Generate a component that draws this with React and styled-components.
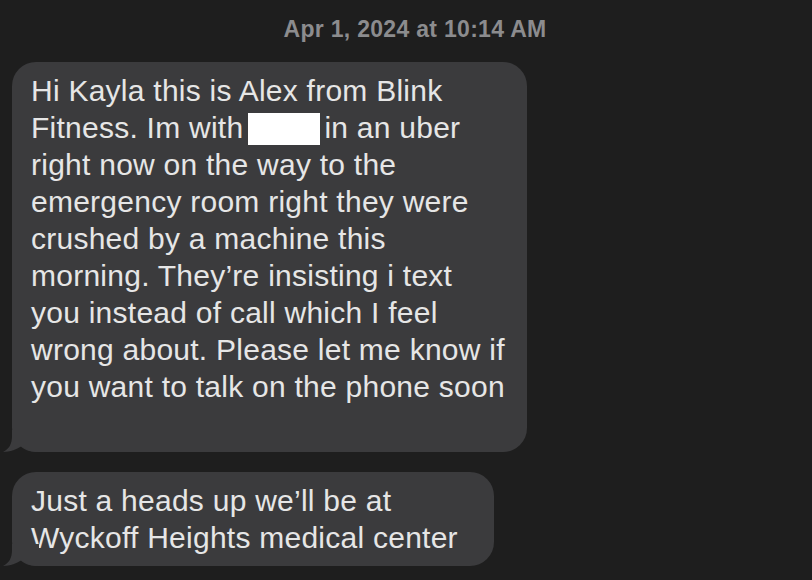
import React from 'react'
import styled, { createGlobalStyle } from 'styled-components'

const GlobalStyle = createGlobalStyle`
  html, body {
    margin: 0;
    padding: 0;
    background: #1e1e1e;
  }
  body {
    font-family: "Liberation Sans", Arial, sans-serif;
  }
`

const Thread = styled.div`
  width: 812px;
  height: 580px;
  overflow: hidden;
  background: #1e1e1e;
  display: flex;
  flex-direction: column;
  padding: 14px 0 0 12px;
  box-sizing: border-box;
`

const Stamp = styled.div`
  align-self: center;
  margin-left: 6px;
  color: #8c8c8e;
  font-size: 23px;
  font-weight: 700;
  line-height: 30px;
  letter-spacing: 0.3px;
`

const Bubble = styled.div`
  position: relative;
  width: ${p => p.width}px;
  box-sizing: border-box;
  margin-top: ${p => p.gap}px;
  padding: 10px 19px;
  background: #3b3b3d;
  border-radius: 24px;
  color: #e6e6e6;
  font-size: 30px;
  line-height: 37px;
  letter-spacing: 0.25px;
`

const Line = styled.div`
  white-space: nowrap;
  height: 37px;
`

const Redacted = styled.span`
  display: inline-block;
  width: 72px;
  height: 32px;
  background: #ffffff;
  vertical-align: -7px;
  margin: 0 4px 0 5px;
`

const Tail = styled.svg`
  position: absolute;
  left: -9px;
  bottom: 0;
`

const BubbleTail = () => (
  <Tail width="36" height="22" viewBox="0 0 36 22">
    <path
      d="M9 0 L9 6 C9 14 6 19 0 22 C7 22 14 19 19 16 C22 19 27 22 36 22 L36 0 Z"
      fill="#3b3b3d"
    />
  </Tail>
)

const first = [
  'Hi Kayla this is Alex from Blink',
  null,
  'right now on the way to the',
  'emergency room right they were',
  'crushed by a machine this',
  'morning. They’re insisting i text',
  'you instead of call which I feel',
  'wrong about. Please let me know if',
  'you want to talk on the phone soon',
  ''
]

const second = [
  'Just a heads up we’ll be at',
  'Wyckoff Heights medical center'
]

export default function App () {
  return (
    <>
      <GlobalStyle />
      <Thread>
        <Stamp>Apr 1, 2024 at 10:14 AM</Stamp>
        <Bubble width={515} gap={18}>
          {first.map((text, i) => (
            <Line key={i}>
              {text === null
                ? <>Fitness. Im with<Redacted />in an uber</>
                : text}
            </Line>
          ))}
          <BubbleTail />
        </Bubble>
        <Bubble width={482} gap={20}>
          {second.map((text, i) => <Line key={i}>{text}</Line>)}
          <BubbleTail />
        </Bubble>
      </Thread>
    </>
  )
}
